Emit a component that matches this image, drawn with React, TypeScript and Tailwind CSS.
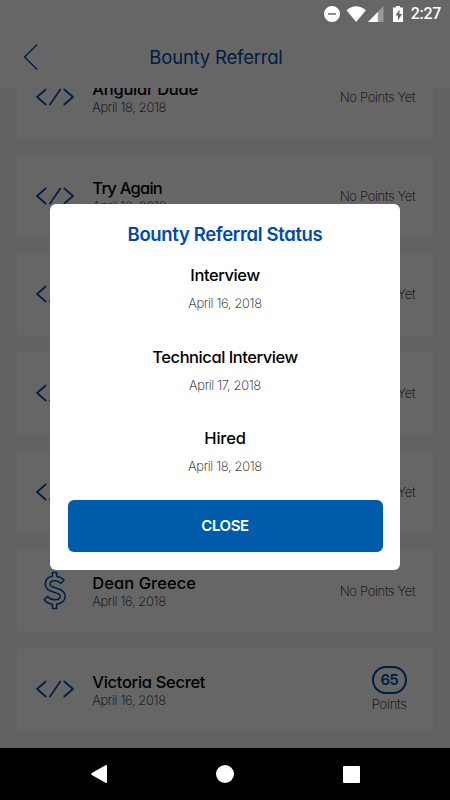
import React from "react";

type Row = { name: string; date: string; icon: "code" | "dollar"; points?: number; tracking: string };

const rows: Row[] = [
  { name: "Angular Dude", date: "April 18, 2018", icon: "code", tracking: "tracking-[-0.250px]" },
  { name: "Try Again", date: "April 18, 2018", icon: "code", tracking: "tracking-[-0.750px]" },
  { name: "John Smith", date: "April 17, 2018", icon: "code", tracking: "tracking-[-0.200px]" },
  { name: "Jane Smith", date: "April 17, 2018", icon: "code", tracking: "tracking-[-0.200px]" },
  { name: "Test Person", date: "April 17, 2018", icon: "code", tracking: "tracking-[-0.200px]" },
  { name: "Dean Greece", date: "April 16, 2018", icon: "dollar", tracking: "tracking-[0.050px]" },
  { name: "Victoria Secret", date: "April 16, 2018", icon: "code", points: 65, tracking: "tracking-[-0.300px]" },
];

const steps = [
  { name: "Interview", date: "April 16, 2018", tracking: "tracking-[-0.400px]" },
  { name: "Technical Interview", date: "April 17, 2018", tracking: "tracking-[-0.450px]" },
  { name: "Hired", date: "April 18, 2018", tracking: "tracking-[-0.200px]" },
];

function CodeIcon() {
  return (
    <svg width="38" height="18" viewBox="0 0 38 18" fill="none" stroke="#0049a8" strokeWidth="1.7" strokeLinecap="round" strokeLinejoin="round">
      <path d="M9.700 1.500 1 9l8.700 7.500M24.300 1.500 14 16.500M28.300 1.500 37 9l-8.700 7.500" />
    </svg>
  );
}

function DollarIcon() {
  return (
    <svg width="24" height="40" viewBox="0 0 24 40" fill="none" stroke="#0049a8" strokeWidth="1.5" strokeLinejoin="round">
      <path d="M9.400 1.400h4.200v3.800c3.300.4 5.700 1.900 7.400 4.100l-3.400 3.100c-1.500-1.800-3.300-2.700-5.700-2.700-3 0-4.900 1.300-4.900 3.300 0 2.300 2.200 3 5.800 3.900 5 1.200 9.300 3 9.300 8.200 0 4.600-3.500 7.500-8.500 8.100v4.200H9.400v-4.200c-3.400-.4-6.300-1.900-8.200-4.500l3.400-3.300c1.900 2.200 4.200 3.300 7.100 3.300 3.300 0 5.600-1.300 5.600-3.500 0-2.400-2.400-3.100-6.200-4C6.200 20 2.300 18.300 2.300 13.200c0-4.300 3-7.300 7.100-8z" />
    </svg>
  );
}

function Card({ row }: { row: Row }) {
  return (
    <div className="flex h-[81.300px] shrink-0 items-center bg-white">
      <div className="flex w-[75px] shrink-0 justify-center">
        {row.icon === "code" ? <CodeIcon /> : <DollarIcon />}
      </div>
      <div className="flex-1 pt-px">
        <div className={`h-5 text-[16.500px] leading-5 font-medium text-black ${row.tracking}`}>{row.name}</div>
        <div className="h-4 text-[13px] leading-4 font-extralight tracking-[-0.350px] text-black">{row.date}</div>
      </div>
      {row.points ? (
        <div className="mr-[26px] flex w-[35px] flex-col items-center">
          <div className="flex h-[28px] w-[35px] items-center justify-center rounded-full border-2 border-[#0049a8] text-[15px] font-semibold tracking-[-0.700px] text-[#0049a8]">
            {row.points}
          </div>
          <div className="mt-[2px] text-[13px] leading-4 font-extralight tracking-[-0.200px] whitespace-nowrap">Points</div>
        </div>
      ) : (
        <div className="mr-[17.500px] text-[13px] leading-4 font-extralight tracking-[-0.300px] whitespace-nowrap">No Points Yet</div>
      )}
    </div>
  );
}

function StatusBar() {
  return (
    <div className="flex h-[27px] items-center justify-end pr-[9px] text-white">
      <svg width="80" height="18" viewBox="0 0 80 18" fill="#fff">
        <path fillRule="evenodd" d="M9 1a8 8 0 1 1 0 16 8 8 0 0 1 0-16ZM5 8.200v1.600h8V8.200Z" />
        <path d="M23.500 5.200Q33.200-2.800 42.900 5.200L33.200 17Z" />
        <path d="M60.500 1v16H45Z" opacity=".35" />
        <path d="M54.800 6.900V17H45Z" />
        <path fillRule="evenodd" d="M73 1h4v1.500h3V17H70V2.500h3ZM76.500 4.500l-4 6H75v5l4-6.500h-2.500Z" />
      </svg>
      <span className="ml-[8px] font-[Roboto] text-[16px] leading-5 font-medium tracking-[-0.300px]">2:27</span>
    </div>
  );
}

export default function App() {
  return (
    <div className="relative flex h-[800px] w-[450px] flex-col overflow-hidden bg-white font-['Inter','Liberation_Sans',sans-serif] [font-feature-settings:'cv11']">
      <header className="grid h-[88px] shrink-0 grid-cols-[60px_1fr_78px] items-center bg-white pt-[26px]">
        <svg className="ml-[23px]" width="16" height="28" viewBox="0 0 16 28" fill="none" stroke="#0049a8" strokeWidth="1.400">
          <path d="M14.200 1.500 1.500 14l12.700 12.500" />
        </svg>
        <h1 className="text-center text-[18.500px] leading-6 tracking-[-0.200px] whitespace-nowrap text-[#0049a8]">Bounty Referral</h1>
      </header>
      <main className="flex-1 overflow-hidden bg-[#f4f4f4] px-[17.300px]">
        <div className="-mt-[31.800px] flex flex-col gap-[17.450px]">
          {rows.map((row) => (
            <Card key={row.name} row={row} />
          ))}
        </div>
      </main>
      <nav className="relative z-20 grid h-[52px] shrink-0 grid-cols-[1fr_auto_1fr] items-center bg-black">
        <svg className="ml-[90px]" width="18" height="20" viewBox="0 0 18 20" fill="#fff">
          <path d="M15.500 1.200Q17 .5 17 2v16q0 1.500-1.500.8L1.800 11q-1.500-1 0-2Z" />
        </svg>
        <div className="h-[18px] w-[18px] rounded-full bg-white" />
        <div className="ml-[109px] h-[17px] w-[17px] rounded-[1px] bg-white" />
      </nav>
      <div className="absolute inset-0 z-10 bg-black/60">
        <StatusBar />
        <div role="dialog" className="mx-[50px] mt-[177px] flex h-[366px] flex-col rounded-[6px] bg-white px-[17.500px] text-center text-black">
          <h2 className="mt-[18px] text-[18.500px] leading-6 font-semibold tracking-[-0.350px] text-[#0049a8]">Bounty Referral Status</h2>
          <div className="mt-[19px] flex flex-col gap-[35.500px]">
            {steps.map((s) => (
              <div key={s.name} className="flex h-[46px] flex-col justify-between">
                <div className={`text-[16.500px] leading-5 font-medium ${s.tracking}`}>{s.name}</div>
                <div className="text-[13px] leading-4 font-extralight tracking-[-0.350px]">{s.date}</div>
              </div>
            ))}
          </div>
          <button className="mt-auto mb-[18px] h-[52px] shrink-0 rounded-[6px] bg-[#005bab] text-[15px] font-semibold tracking-[-0.400px] text-white">CLOSE</button>
        </div>
      </div>
    </div>
  );
}
